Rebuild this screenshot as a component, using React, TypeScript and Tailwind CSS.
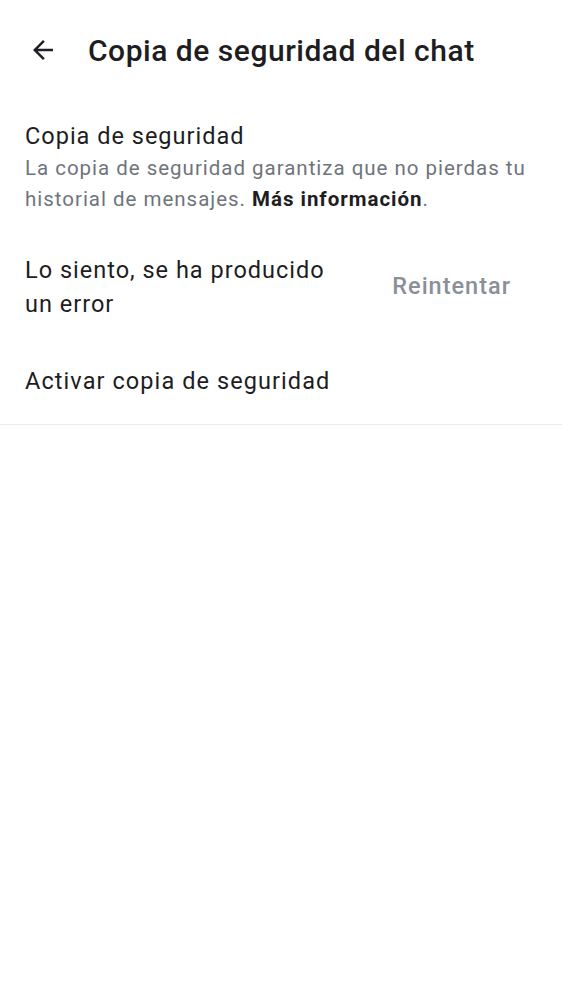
import React from "react";

export default function App() {
  return (
    <div className="w-[562px] min-h-[1000px] bg-white text-[#1c1b1f]" style={{ fontFamily: "Roboto, 'Noto Sans', sans-serif" }}>
      <div className="flex items-center h-[100px] pl-[28px]">
        <svg width="30" height="30" viewBox="0 0 24 24" className="text-[#1f1f24]">
          <path d="M20 11H7.83l5.59-5.59L12 4l-8 8 8 8 1.41-1.41L7.83 13H20v-2z" fill="currentColor" />
        </svg>
        <h1 className="ml-[30px] text-[30px] font-medium tracking-[0.52px] text-[#1d1d22]">Copia de seguridad del chat</h1>
      </div>
      <div className="px-[25px] pt-[21px]">
        <div className="text-[23.5px] tracking-[1px] leading-[30px] text-[#1d1d22]">Copia de seguridad</div>
        <p className="text-[20.5px] tracking-[0.98px] leading-[31px] text-[#6f747c] mt-[2px]">
          La copia de seguridad garantiza que no pierdas tu historial de mensajes.{" "}
          <span className="font-bold text-[#1d1d22]">Más información</span>.
        </p>
      </div>
      <div className="flex items-center justify-between pl-[25px] pr-[51px] mt-[38px]">
        <div className="w-[320px] text-[23.5px] tracking-[1px] leading-[34px] text-[#1d1d22]">Lo siento, se ha producido un error</div>
        <div className="text-[23.5px] tracking-[1px] font-medium text-[#8a9098]">Reintentar</div>
      </div>
      <div className="px-[25px] mt-[45px] text-[23.5px] tracking-[1.08px] leading-[30px] text-[#1d1d22]">Activar copia de seguridad</div>
      <div className="mt-[28px] h-px bg-[#ebebee]" />
    </div>
  );
}
